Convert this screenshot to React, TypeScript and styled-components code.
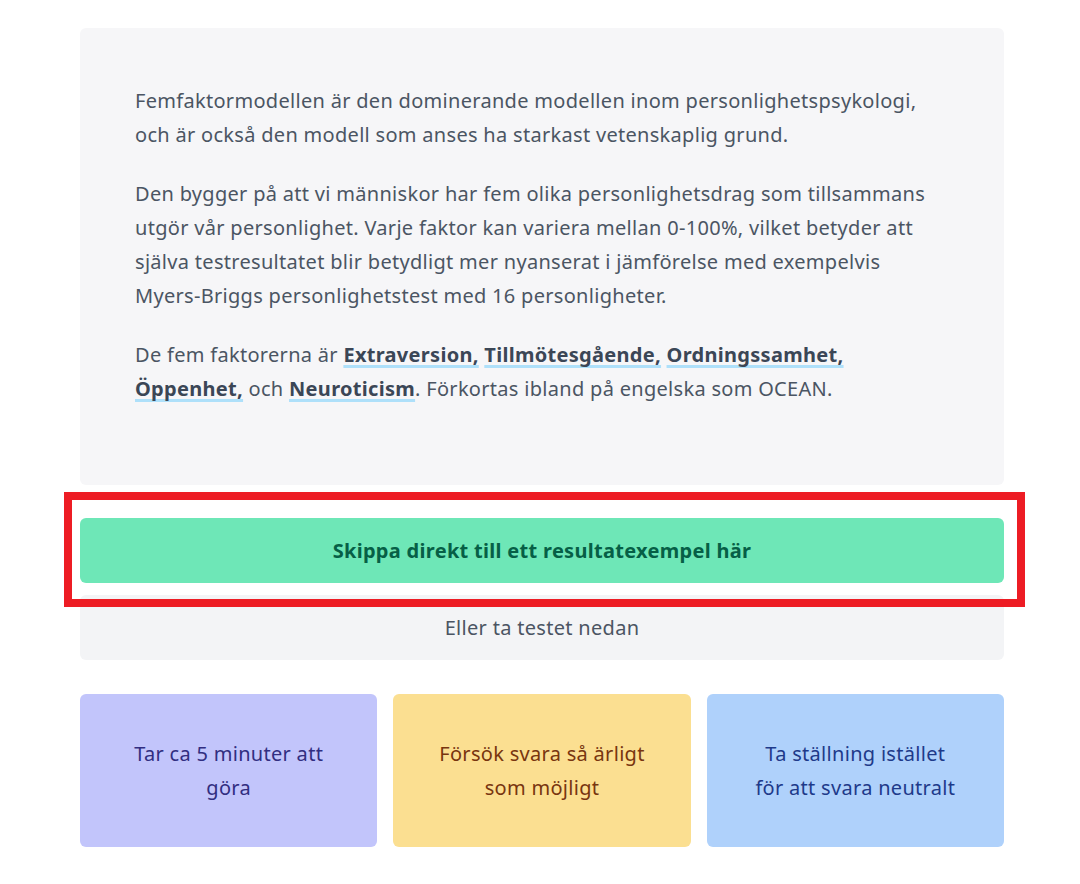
import React from "react";
import styled, { createGlobalStyle } from "styled-components";

const Global = createGlobalStyle`
  html, body { margin: 0; padding: 0; background: #ffffff; }
  body {
    font-family: "Noto Sans", "Open Sans", "Liberation Sans", sans-serif;
    letter-spacing: 0.3px;
  }
`;

const Page = styled.main`
  width: 924px;
  margin-left: 80px;
  padding-top: 28px;
  display: flex;
  flex-direction: column;
`;

const IntroCard = styled.section`
  background: #f6f6f8;
  border-radius: 6px;
  padding: 56px 40px 54px 55px;
`;

const Para = styled.p`
  margin: 0 0 25px;
  font-size: 20px;
  line-height: 34px;
  color: #4b5563;
  white-space: nowrap;
`;

const Factor = styled.strong`
  font-weight: 700;
  color: #3b4656;
  text-decoration: underline;
  text-decoration-color: #aee0fa;
  text-decoration-thickness: 3px;
  text-underline-offset: 3px;
  text-decoration-skip-ink: none;
`;

const CtaWrap = styled.div`
  position: relative;
  margin-top: 33px;
  display: flex;
  flex-direction: column;
  gap: 12px;
`;

const CtaButton = styled.a`
  display: flex;
  align-items: center;
  justify-content: center;
  height: 65px;
  background: #6ee7b7;
  border-radius: 6px;
  color: #065f46;
  font-weight: 700;
  font-size: 20px;
  text-decoration: none;
`;

const Highlight = styled.div`
  position: absolute;
  left: -16px;
  top: -26px;
  width: 945px;
  height: 99px;
  border: 8px solid #ed1c24;
  pointer-events: none;
`;

const AltBox = styled.div`
  height: 65px;
  display: flex;
  align-items: center;
  justify-content: center;
  background: #f3f4f6;
  border-radius: 6px;
  color: #4b5563;
  font-size: 20px;
`;

const Tips = styled.div`
  margin-top: 34px;
  display: grid;
  grid-template-columns: repeat(3, 1fr);
  gap: 16px;
`;

const Tip = styled.div<{ $bg: string; $fg: string }>`
  height: 153px;
  display: flex;
  align-items: center;
  justify-content: center;
  text-align: center;
  padding: 0 30px;
  box-sizing: border-box;
  background: ${(p) => p.$bg};
  color: ${(p) => p.$fg};
  border-radius: 6px;
  font-size: 20px;
  line-height: 34px;
`;

export default function App() {
  return (
    <>
      <Global />
      <Page>
        <IntroCard>
          <Para>
            Femfaktormodellen är den dominerande modellen inom personlighetspsykologi,
            <br />
            och är också den modell som anses ha starkast vetenskaplig grund.
          </Para>
          <Para>
            Den bygger på att vi människor har fem olika personlighetsdrag som tillsammans
            <br />
            utgör vår personlighet. Varje faktor kan variera mellan 0-100%, vilket betyder att
            <br />
            själva testresultatet blir betydligt mer nyanserat i jämförelse med exempelvis
            <br />
            Myers-Briggs personlighetstest med 16 personligheter.
          </Para>
          <Para>
            De fem faktorerna är <Factor>Extraversion,</Factor> <Factor>Tillmötesgående,</Factor>{" "}
            <Factor>Ordningssamhet,</Factor>
            <br />
            <Factor>Öppenhet,</Factor> och <Factor>Neuroticism</Factor>. Förkortas ibland på engelska som OCEAN.
          </Para>
        </IntroCard>
        <CtaWrap>
          <CtaButton href="#">Skippa direkt till ett resultatexempel här</CtaButton>
          <AltBox>Eller ta testet nedan</AltBox>
          <Highlight />
        </CtaWrap>
        <Tips>
          <Tip $bg="#c2c5fb" $fg="#312e81">
            Tar ca 5 minuter att
            <br />
            göra
          </Tip>
          <Tip $bg="#fbdf91" $fg="#78350f">
            Försök svara så ärligt
            <br />
            som möjligt
          </Tip>
          <Tip $bg="#afd1fb" $fg="#1e3a8a">
            Ta ställning istället
            <br />
            för att svara neutralt
          </Tip>
        </Tips>
      </Page>
    </>
  );
}
